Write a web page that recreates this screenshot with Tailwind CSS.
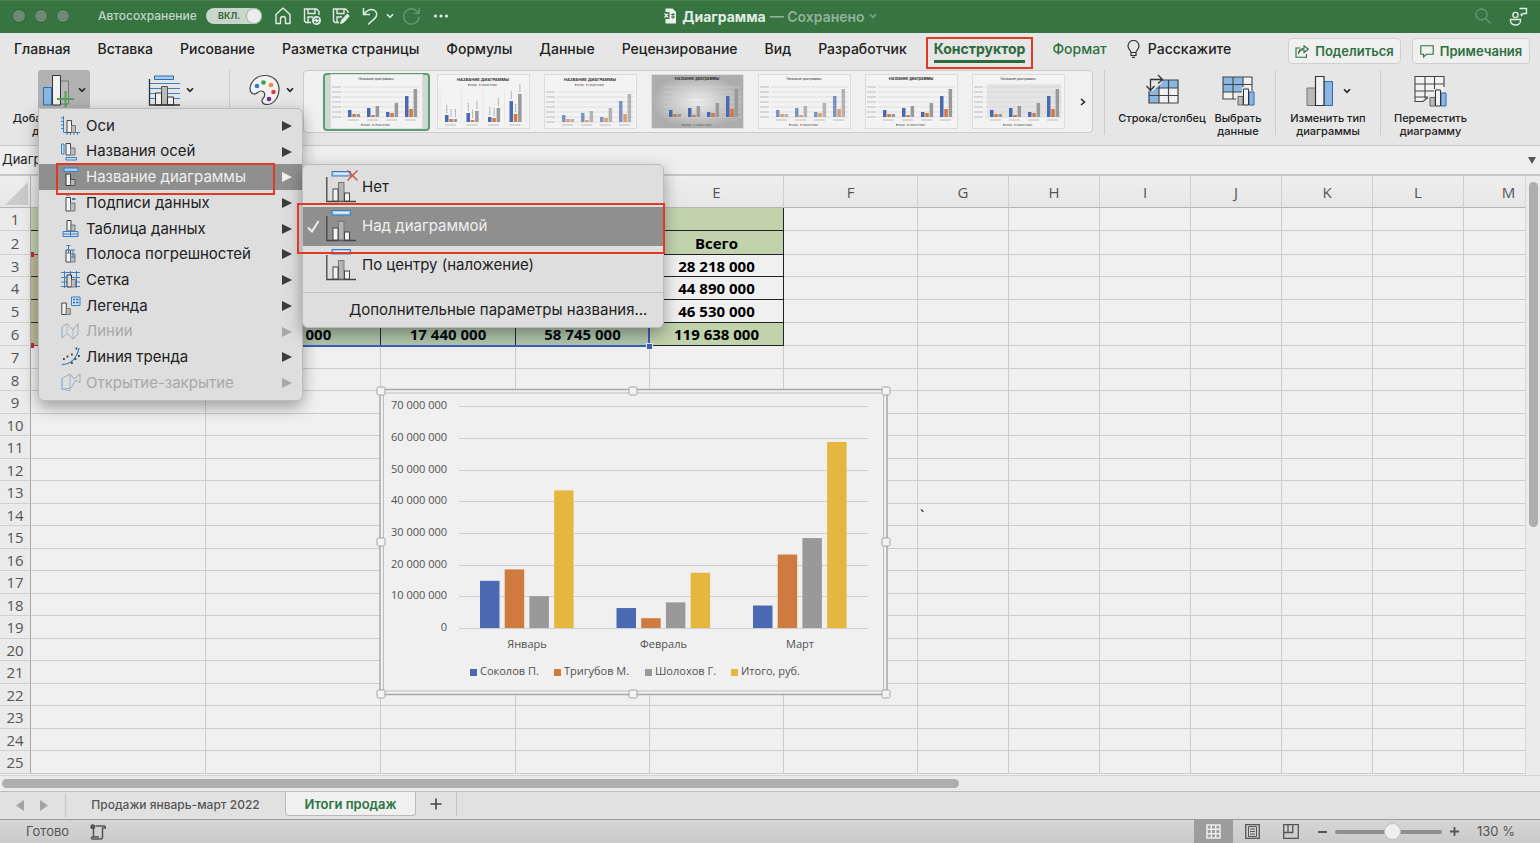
<!DOCTYPE html>
<html lang="ru">

<head>
    <meta charset="UTF-8">
    <meta name="viewport" content="width=device-width, initial-scale=1.0">
    <title>Диаграмма — Сохранено</title>
    <script src="https://cdn.jsdelivr.net/npm/@tailwindcss/browser@4"></script>
</head>

<body class="relative flex flex-col h-screen overflow-hidden bg-[#e6e6e6] font-['Inter','Liberation_Sans',sans-serif] text-[#222]">

    <!-- shared icon shapes -->
    <svg class="hidden">
        <symbol id="chev" viewBox="0 0 8 6"><path d="M1 1.2 4 4.4 7 1.2" fill="none" stroke="currentColor" stroke-width="1.6" /></symbol>
        <symbol id="minichart" viewBox="0 1 30 34">
            <path d="M.8 7v24.500H30" fill="none" stroke="#444" stroke-width="1.300" />
            <rect x="12.500" y="12.500" width="5.500" height="18.500" fill="#b5b3b1" stroke="#777" />
            <rect x="7" y="19" width="5" height="12" fill="#f3f3f3" stroke="#444" />
            <rect x="18.500" y="23" width="5" height="8" fill="#f3f3f3" stroke="#444" />
            <rect x="6" y="1.500" width="18.500" height="4.500" fill="#a9cdee" stroke="#3a7fbf" />
            <path d="M8 3.800h14.500" stroke="#fff" />
        </symbol>
    </svg>

    <!-- title bar -->
    <header class="grid grid-cols-[1fr_auto_1fr] items-center h-[33px] shrink-0 pb-[2px] bg-[#367442] border-t border-[#46804f] text-[#e3ece4]">
        <div class="flex items-center pl-3">
            <div class="flex gap-2">
                <span class="size-[14px] rounded-full bg-[#6d8a72] border border-[#2f6238]"></span>
                <span class="size-[14px] rounded-full bg-[#6d8a72] border border-[#2f6238]"></span>
                <span class="size-[14px] rounded-full bg-[#6d8a72] border border-[#2f6238]"></span>
            </div>
            <label for="autosave" class="ml-7 w-[100px] text-[12px] font-medium whitespace-nowrap text-[#c3d6c6]">Автосохранение</label>
            <span class="relative ml-2 flex items-center w-14 h-4 rounded-full bg-[#c9d6cb]">
                <input id="autosave" type="checkbox" checked class="absolute inset-0 appearance-none">
                <span class="ml-3 text-[9px] font-bold text-[#3f6747]">ВКЛ.</span>
                <span class="absolute right-0 size-4 rounded-full bg-[#ededed] border border-[#a5b5a8]"></span>
            </span>
            <button aria-label="Домой" class="ml-3"><svg width="18" height="18" viewBox="0 0 18 18" fill="none" stroke="currentColor" stroke-width="1.400"><path d="M2 7.500 9 1l7 6.500V16.500h-4.500V12a2.500 2.500 0 0 0-5 0v4.500H2Z" stroke-linejoin="round" /></svg></button>
            <button aria-label="Сохранить" class="ml-[11px]"><svg width="19" height="19" viewBox="0 0 19 19" fill="none" stroke="currentColor" stroke-width="1.400"><path d="M8 15.500H3L1.500 14V2h12l2.500 2.500V8M5 2v4.500h7V2M5 15.500V10h5" /><circle cx="13.500" cy="13.500" r="4.500" fill="#e3ece4" stroke="none" /><path d="M11.300 13a2.300 2.300 0 0 1 4-1M15.800 14a2.300 2.300 0 0 1-4 1M15.500 10.800V12.300H14M11.500 16.200V14.700H13" stroke="#367442" stroke-width=".9" /></svg></button>
            <button aria-label="Сохранить как" class="ml-[10px]"><svg width="19" height="19" viewBox="0 0 19 19" fill="none" stroke="currentColor" stroke-width="1.400"><path d="M7 15.500H3L1.500 14V2h12l2.500 2.500V6M5 2v4.500h7V2M5 15.500V10h5" /><path d="m8.500 16.500 1-3.200L15.300 7l2 2-5.800 6.500Z" fill="currentColor" stroke-width="1" /></svg></button>
            <button aria-label="Отменить" class="ml-[11px]"><svg width="17" height="19" viewBox="0 0 17 19" fill="none" stroke="currentColor" stroke-width="1.500"><path d="M1.500 1v6.500H8M1.800 7.200C5 3.500 9 1.800 12 3.200c3.600 1.800 3.300 5.800.8 8.200L6 17.500" /></svg></button>
            <button aria-label="Список отмены" class="ml-[7px]"><svg width="8" height="6"><use href="#chev" /></svg></button>
            <button aria-label="Повторить" class="ml-2 text-[#6b9a75]"><svg width="19" height="19" viewBox="0 0 19 19" fill="none" stroke="currentColor" stroke-width="1.300"><path d="M17 9.500a7.700 7.700 0 1 1-2.500-5.700L17 6.200M17.200 1v5.400h-5.400" /></svg></button>
            <button aria-label="Ещё" class="ml-3"><svg width="16" height="4" fill="currentColor"><circle cx="2.500" cy="2" r="1.600" /><circle cx="8" cy="2" r="1.600" /><circle cx="13.500" cy="2" r="1.600" /></svg></button>
        </div>
        <div class="flex items-center text-[14px] font-bold">
            <svg width="14" height="16" viewBox="0 0 14 16"><path d="M2.500.5h7L13 4v11.500H2.500Z" fill="#edf1ed" /><path d="M0 4h6.500v7H0Z" fill="#367442" /><path d="m1.500 5.500 3.500 4m0-4-3.500 4" stroke="#edf1ed" stroke-width="1.200" /><path d="M8 6.500h4M8 9h4M10 5v6" stroke="#367442" /></svg>
            <h1 class="ml-[5px]">Диаграмма</h1>
            <span class="ml-1 font-semibold text-[#92b399]">— Сохранено</span>
            <svg class="ml-1 text-[#7ea487]" width="8" height="6"><use href="#chev" /></svg>
        </div>
        <div class="flex items-center justify-end gap-[18px] pr-3">
            <button aria-label="Поиск" class="text-[#6b9a75]"><svg width="16" height="16" viewBox="0 0 16 16" fill="none" stroke="currentColor" stroke-width="1.300"><circle cx="6.500" cy="6.500" r="5.500" /><path d="m10.500 10.500 5 5" /></svg></button>
            <button aria-label="Совместная работа"><svg width="19" height="19" viewBox="0 0 19 19" fill="none" stroke="currentColor" stroke-width="1.400"><circle cx="6.500" cy="8" r="2.600" /><path d="M1.500 12.500h10v1.500a5 4 0 0 1-10 0ZM10.500 1.500h7v5h-3L12.500 8.500 12 6.500" /></svg></button>
        </div>
    </header>

    <!-- ribbon tabs -->
    <nav class="relative flex items-start h-[37px] shrink-0 pl-[14px] pr-[10px] text-[14px] leading-5 font-medium whitespace-nowrap">
        <div class="flex gap-[27px] pt-[6px]">
            <a href="#">Главная</a>
            <a href="#">Вставка</a>
            <a href="#">Рисование</a>
            <a href="#">Разметка страницы</a>
            <a href="#">Формулы</a>
            <a href="#">Данные</a>
            <a href="#">Рецензирование</a>
            <a href="#">Вид</a>
            <a href="#">Разработчик</a>
            <a href="#" class="relative h-6 border-b-[3px] border-[#2c6a3b] font-bold text-[#2c6a3b]">Конструктор
                <span class="absolute -left-2 -top-[2px] -right-2 h-8 border-2 border-[#e03a24]"></span></a>
            <a href="#" class="text-[#2f6f3f]">Формат</a>
        </div>
        <a href="#" class="flex items-center gap-2 ml-5 pt-[6px]">
            <svg width="13" height="18" viewBox="0 0 13 18" fill="none" stroke="#333" stroke-width="1.200"><path d="M4 12.500C4 10.500 1 9.500 1 6a5.500 5.500 0 0 1 11 0c0 3.500-3 4.500-3 6.500ZM4 12.500V15.500h5V12.500M5 17.300h3" /></svg>
            Расскажите</a>
        <button class="flex items-center justify-center gap-[6px] ml-auto mt-[5px] w-[113px] h-[26px] rounded border border-[#cfcfcf] bg-[#f0f0f0] text-[13px] font-semibold text-[#2f6f3f]">
            <svg width="14" height="13" viewBox="0 0 14 13" fill="none" stroke="currentColor" stroke-width="1.100"><path d="M5 3H1v9.300h10.500V9M3.500 9C4 6 6 4.800 9 4.800V7.500L13.300 4 9 .8v2.400C5.500 3.200 3.500 5.500 3.500 9Z" /></svg>
            Поделиться</button>
        <button class="flex items-center justify-center gap-[6px] ml-[11px] mt-[5px] w-[118px] h-[26px] rounded border border-[#cfcfcf] bg-[#f0f0f0] text-[13px] font-semibold text-[#2f6f3f]">
            <svg width="14" height="13" viewBox="0 0 14 13" fill="none" stroke="currentColor" stroke-width="1.100"><path d="M.8.8h12.400v8.500H6.500L3.500 12V9.300H.8Z" /></svg>
            Примечания</button>
    </nav>

    <!-- ribbon -->
    <section class="flex h-[75px] shrink-0 text-[11px] leading-[13px] text-center font-medium whitespace-nowrap">
        <button class="flex flex-col items-center w-32">
            <span class="flex items-center gap-2 h-[39px] w-[52px] pl-1 rounded-[3px] bg-[#b1b1b1]">
                <svg width="32" height="34" viewBox="0 0 32 34"><path d="M1.500 14.500h8V32h-8Z" fill="#8ab7e2" stroke="#2b6cb0" /><path d="M18 8h8.500v23H18Z" fill="#b8b8b8" stroke="#777" /><path d="M10.500 2.500h8V32h-8Z" fill="#f2f2f2" stroke="#333" /><path d="M15 26h17M23.500 18v16" stroke="#4fa35c" stroke-width="2" /></svg>
                <svg class="-ml-1" width="8" height="6"><use href="#chev" /></svg>
            </span>
            <span class="mt-[3px]">Добавить элемент<br>диаграммы</span>
        </button>
        <button class="flex flex-col items-center w-[85px]">
            <span class="flex items-center gap-[6px] h-[39px]">
                <svg width="32" height="34" viewBox="0 0 32 34" fill="none"><path d="M2 10.500h30M2 15.500h30M2 20.500h30M2 25.500h30" stroke="#3c82c4" stroke-width="1.200" /><path d="M6.500 3h19v3.500h-19Z" fill="#a9cdee" stroke="#2b6cb0" /><path d="M13.500 13.500h6V32h-6Z" fill="#bbb" stroke="#555" /><path d="M7.500 20h6v12h-6ZM19.500 24h6v8h-6Z" fill="#f2f2f2" stroke="#333" /><path d="M1.500 6v26H32" stroke="#333" stroke-width="1.300" /></svg>
                <svg width="8" height="6"><use href="#chev" /></svg>
            </span>
            <span class="mt-[3px]">Экспресс-<br>макет</span>
        </button>
        <span class="ml-4 w-px h-[65px] bg-[#cdcdcd]"></span>
        <button class="flex flex-col items-center w-[73px] pl-[10px]">
            <span class="flex items-center gap-[6px] h-[39px]">
                <svg width="31" height="32" viewBox="0 0 31 32"><path d="M1 14C2 7 8 1.500 16 1.500c8 0 14 5.500 14 13.500S25 30.500 18 30.500c-5 0-6-4-4-6 3-3 2-7.500-2-7.500-3 0-4 3.500-7 3-3-.5-4-3-4-6Z" fill="#f2f2f2" stroke="#444" stroke-width="1.200" /><circle cx="8" cy="12" r="2.300" fill="#2f7fc6" /><circle cx="14.500" cy="8.500" r="2.300" fill="#3f9e4d" /><circle cx="22" cy="11" r="2.300" fill="#e8913a" /><circle cx="24.500" cy="18" r="2.300" fill="#d8433b" /><circle cx="20" cy="25" r="2.300" fill="#7b2a8c" /></svg>
                <svg width="8" height="6"><use href="#chev" /></svg>
            </span>
            <span class="mt-[3px]">Изменить<br>цвета</span>
        </button>
        <div class="flex items-center flex-1 min-w-0 h-[63px] pl-[19px] rounded border border-[#cbcbcb] bg-[#f0f0f0]">
            <div id="styles" class="flex flex-1 min-w-0 overflow-hidden"></div>
            <button aria-label="Другие стили" class="w-[19px] flex justify-center"><svg width="6" height="8" viewBox="0 0 6 8"><path d="M1 1l3.500 3L1 7" fill="none" stroke="#222" stroke-width="1.500" /></svg></button>
        </div>
        <span class="ml-[11px] w-px h-[65px] bg-[#cdcdcd]"></span>
        <button class="flex flex-col items-center w-[114px]">
            <span class="flex items-center h-[41px]">
                <svg width="34" height="36" viewBox="0 0 34 36" fill="none"><path d="M4 7h29v23H4Z" fill="#f2f2f2" /><path d="M4 7h29v8H14v15H4Z" fill="#8ab7e2" /><path d="M4 7h29v23H4ZM4 15h29M4 22.500h29M14 7v23M23.500 7v23" stroke="#444" stroke-width="1.200" /><path d="M0 3h17v7L8 18H0Z" fill="#e6e6e6" /><path d="M5.500 17V6.500H17M1.500 13l4 4.500 4-4.500M13 2l4.500 4.500-4.500 4" stroke="#333" stroke-width="1.300" /></svg>
            </span>
            <span class="mt-px">Строка/столбец</span>
        </button>
        <button class="flex flex-col items-center w-[38px]">
            <span class="flex items-center h-[41px]">
                <svg width="33" height="32" viewBox="0 0 33 32" fill="none"><path d="M1 2h29v22H1Z" fill="#f2f2f2" /><path d="M1 2h20v15H1Z" fill="#8ab7e2" /><path d="M1 2h29v22H1ZM1 9.500h29M1 17h29M11 2v22M21 2v22" stroke="#444" stroke-width="1.100" /><path d="M14 18h6v-6h7v4h6v15H14Z" fill="#e6e6e6" /><path d="M16 21.500h5V30h-5Z" fill="#bbb" stroke="#666" /><path d="M27 17h5v13h-5Z" fill="#8ab7e2" stroke="#2b6cb0" /><path d="M21.500 14h5v16h-5Z" fill="#f2f2f2" stroke="#333" /></svg>
            </span>
            <span class="mt-px">Выбрать<br>данные</span>
        </button>
        <span class="ml-[18px] w-px h-[65px] bg-[#cdcdcd]"></span>
        <button class="flex flex-col items-center w-[104px]">
            <span class="flex items-center gap-[9px] h-[41px]">
                <svg width="28" height="32" viewBox="0 0 28 32"><path d="M1 13h9v17.500H1Z" fill="#bbb9b7" stroke="#777" /><path d="M18 6.500h8.500v24H18Z" fill="#8ab7e2" stroke="#2b6cb0" /><path d="M9.500 1.500h8.500v29H9.500Z" fill="#f2f2f2" stroke="#333" stroke-width="1.200" /></svg>
                <svg width="8" height="6"><use href="#chev" /></svg>
            </span>
            <span class="mt-px">Изменить тип<br>диаграммы</span>
        </button>
        <span class="w-px h-[65px] bg-[#cdcdcd]"></span>
        <button class="flex flex-col items-center w-[99px] mr-[60px]">
            <span class="flex items-center h-[41px]">
                <svg width="33" height="32" viewBox="0 0 33 32" fill="none"><path d="M1 1.500h29v20L14 26.500H9L1 26Z" fill="#f2f2f2" /><path d="M14 22.500 9 26.500H1V1.500h29V12M1 9h29M1 16h21M1 22h13M11 1.500v22M20.500 1.500v17" stroke="#444" stroke-width="1.100" /><path d="M14 20h6v-6h7v2h6v15H14Z" fill="#e6e6e6" /><path d="M16 22.500h5V31h-5Z" fill="#bbb" stroke="#666" /><path d="M27 18h5v13h-5Z" fill="#8ab7e2" stroke="#2b6cb0" /><path d="M21.500 15h5v16h-5Z" fill="#f2f2f2" stroke="#333" /></svg>
            </span>
            <span class="mt-px">Переместить<br>диаграмму</span>
        </button>
    </section>

    <!-- name box / formula bar -->
    <div class="flex items-center h-[31px] shrink-0 border-t border-b-2 border-[#c6c6c6] bg-[#eeeeee]">
        <input aria-label="Имя" value="Диаграмма 2" class="w-[120px] pl-[2px] text-[13px] outline-none">
        <input aria-label="Строка формул" class="flex-1 outline-none">
        <svg class="mr-1" width="8" height="7"><path d="M0 0h8L4 7Z" fill="#555" /></svg>
    </div>

    <!-- sheet -->
    <main class="flex flex-1 min-h-0 font-['Open_Sans','Noto_Sans',sans-serif]">
        <div class="relative flex-1 min-w-0 overflow-hidden bg-[#f0f0f0]">
            <table class="table-fixed w-[1554px] border-separate border-spacing-0 text-[15px] leading-[18px] text-center">
                <colgroup>
                    <col class="w-[31px]"><col class="w-[175px]"><col class="w-[175px]"><col class="w-[135px]"><col class="w-[134px]"><col class="w-[134px]"><col class="w-[134px]">
                    <col class="w-[91px]"><col class="w-[91px]"><col class="w-[91px]"><col class="w-[91px]"><col class="w-[91px]"><col class="w-[91px]"><col class="w-[90px]">
                </colgroup>
                <thead>
                    <tr id="letters" class="h-8 bg-linear-to-b from-[#eeeeee] to-[#e6e6e6] text-[#555]"></tr>
                </thead>
                <tbody id="rows" class="text-black"></tbody>
            </table>

            <!-- source ranges of the chart -->
            <div class="absolute left-[31px] top-[78px] w-[175px] h-[92px] border-y border-[#b3323a] bg-[#c0392b]/15"></div>
            <span class="absolute left-[31px] top-[76px] w-[3px] h-[5px] bg-[#b3323a]"></span>
            <span class="absolute left-[31px] top-[167px] w-[3px] h-[5px] bg-[#b3323a]"></span>
            <div class="absolute left-[206px] top-[78px] w-[444px] h-[93px] border-2 border-[#3a5fbd] bg-[#3a5fbd]/10"></div>
            <span class="absolute left-[646px] top-[167px] size-[7px] border border-[#f0f0f0] bg-[#3a5fbd]"></span>

            <!-- chart object -->
            <figure class="absolute left-[376px] top-[209px]">
                <svg id="chart" width="516" height="314" class="text-[11px] fill-[#505050]"></svg>
            </figure>
            <span class="absolute left-[920px] top-[328px] text-[15px] text-black">`</span>
        </div>
        <div class="relative w-[15px] border-l border-[#d8d8d8] bg-[#ebebeb] pt-[6px]">
            <div class="ml-[3px] w-[9px] h-[345px] rounded-full bg-[#aeaeae]"></div>
        </div>
    </main>

    <!-- horizontal scrollbar -->
    <div class="flex items-center h-4 shrink-0 pl-[2px] border-t border-[#d4d4d4] bg-[#ebebeb]">
        <div class="w-[957px] h-[9px] rounded-full bg-[#aeaeae]"></div>
    </div>

    <!-- sheet tabs -->
    <div class="flex h-7 shrink-0 border-t border-[#bdbdbd] bg-[#e1e1e1] text-[13px] font-medium text-[#555]">
        <div class="flex items-center gap-4 w-[66px] h-6 pl-4 mt-[1px] border-r border-[#c4c4c4]">
            <svg width="8" height="11"><path d="M8 0v11L0 5.500Z" fill="#a3a3a3" /></svg>
            <svg width="8" height="11"><path d="M0 0v11l8-5.500Z" fill="#a3a3a3" /></svg>
        </div>
        <button class="w-[219px] h-6 pt-[2px] text-[12px]">Продажи январь-март 2022</button>
        <button class="w-[131px] h-6 pt-[2px] rounded-b border border-t-0 border-[#b9b9b9] bg-[#f0f0f0] font-semibold text-[#2c7440]">Итоги продаж</button>
        <button aria-label="Новый лист" class="flex items-center justify-center w-[41px] h-6 border-r border-[#c4c4c4]"><svg width="12" height="12"><path d="M6 .5v11M.5 6h11" stroke="#444" stroke-width="1.600" /></svg></button>
    </div>

    <!-- status bar -->
    <footer class="flex items-center h-6 shrink-0 border-t border-[#9c9c9c] bg-linear-to-b from-[#d6d6d6] to-[#cacaca] text-[13px] text-[#555]">
        <span class="ml-[26px]">Готово</span>
        <svg class="ml-[21px]" width="16" height="16" viewBox="0 0 16 16" fill="none" stroke="#555" stroke-width="1.500"><circle cx="2.800" cy="2.800" r="2.500" fill="#555" stroke="none" /><path d="M3.500 5v8M5.500 2h8.500c1 0 1.500.8 1.500 2h-3v9c0 1.500-.5 2-2 2H2.500C1 15 1 13 2.500 13H9" /></svg>
        <div class="flex ml-auto h-full">
            <button aria-label="Обычный" class="flex items-center justify-center w-[39px] bg-[#9c9c9c]"><svg width="15" height="15" viewBox="0 0 15 15"><path d="M1 1h13v13H1ZM1 5.300h13M1 9.700h13M5.300 1v13M9.700 1v13" fill="none" stroke="#ededed" stroke-width="1.500" /></svg></button>
            <button aria-label="Разметка страницы" class="flex items-center justify-center w-[39px]"><svg width="15" height="15" viewBox="0 0 15 15" fill="none" stroke="#555"><path d="M.7.7h13.600v13.600H.7Z" stroke-width="1.300" /><path d="M3.500 2.500h8v10h-8ZM5 5h5M5 7.500h5M5 10h5" /></svg></button>
            <button aria-label="Страничный режим" class="flex items-center justify-center w-[38px]"><svg width="16" height="15" viewBox="0 0 16 15" fill="none" stroke="#555" stroke-width="1.300"><path d="M.7.7h14.600v13.600H.7ZM.7 8.500h9V.7M5 .7v7.800" /></svg></button>
        </div>
        <button aria-label="Уменьшить" class="ml-[8px] w-[9px] h-[2px] bg-[#555]"></button>
        <input type="range" aria-label="Масштаб" min="0" max="100" value="54" class="ml-2 w-[107px] h-1 rounded-full appearance-none bg-[#8f8f8f] [&::-webkit-slider-thumb]:appearance-none [&::-webkit-slider-thumb]:size-[17px] [&::-webkit-slider-thumb]:rounded-full [&::-webkit-slider-thumb]:bg-[#f0f0f0] [&::-webkit-slider-thumb]:border [&::-webkit-slider-thumb]:border-[#c0c0c0]">
        <button aria-label="Увеличить" class="ml-2"><svg width="9" height="9"><path d="M4.500 0v9M0 4.500h9" stroke="#555" stroke-width="1.800" /></svg></button>
        <span class="ml-[18px] mr-[25px]">130 %</span>
    </footer>

    <!-- chart element menu -->
    <ul id="menu" class="absolute left-[38px] top-[108px] grid auto-rows-fr w-[265px] h-[293px] py-1 rounded-b-md rounded-tr-md border border-[#bcbcbc] bg-[#dedede] shadow-[0_6px_16px_rgba(0,0,0,0.35)] text-[15px] whitespace-nowrap"></ul>
    <span class="absolute left-[56px] top-[163px] w-[219px] h-8 border-2 border-[#e03a24]"></span>

    <!-- chart title submenu -->
    <ul class="absolute left-[302px] top-[164px] w-[362px] h-[164px] pt-[3px] rounded-md border border-[#bcbcbc] bg-[#dedede] shadow-[0_6px_16px_rgba(0,0,0,0.35)] text-[15px] whitespace-nowrap">
        <li><button class="relative flex items-center w-full h-[39px] pl-[23px] gap-[6px]">
            <svg width="30" height="34"><use href="#minichart" /></svg>Нет
            <svg class="absolute left-[44px] top-[2px]" width="11" height="11"><path d="m.5.5 10 10m0-10-10 10" stroke="#d8433b" stroke-width="1.300" /></svg>
        </button></li>
        <li><button class="relative flex items-center w-full h-[39px] pl-[23px] gap-[6px] bg-[#8f8f8f] text-[#f0f0f0]">
            <svg class="absolute left-1 top-[13px]" width="13" height="13"><path d="m1 7.500 4 4L11.500 1" fill="none" stroke="#f0f0f0" stroke-width="2" /></svg>
            <svg width="30" height="34"><use href="#minichart" /></svg>Над диаграммой
        </button></li>
        <li><button class="flex items-center w-full h-[39px] pl-[23px] gap-[6px]">
            <svg width="30" height="34"><use href="#minichart" /></svg>По центру (наложение)
        </button></li>
        <li class="mt-[7px] border-t border-[#c2c2c2]"><button class="flex items-center h-[35px] pl-[46px]">Дополнительные параметры названия...</button></li>
    </ul>
    <span class="absolute left-[297px] top-[203px] w-[368px] h-[51px] border-2 border-[#e03a24]"></span>

    <script>
        // menu entries: name, icon, state
        const items = [
            ['Оси', '<path d="M2.500 0v16.500H19M0 2h2.500M0 5.500h2.500M0 9h2.500M0 12.500h2.500M6 16.500V19M9.500 16.500V19M13 16.500V19M16.500 16.500V19" fill="none" stroke="#3a7fbf"/><path d="M6 4.500h4.500v12H6Z" fill="#f2f2f2" stroke="#444"/><path d="M10.500 9.500h4v7h-4Z" fill="#bbb" stroke="#777"/>'],
            ['Названия осей', '<path d="M.5 2h2.500v10H.500ZM5 15.500h10.500V18H5Z" fill="#cfe2f3" stroke="#3a7fbf"/><path d="M5 1.500h4.500v11.500H5Z" fill="#f2f2f2" stroke="#444"/><path d="M9.500 6h4.500v7H9.500Z" fill="#bbb" stroke="#777"/>'],
            ['Название диаграммы', '<path d="M3 1h14v3.500H3Z" fill="#a9cdee" stroke="#3a7fbf"/><path d="M5 7h4.500v11.500H5Z" fill="#f2f2f2" stroke="#333"/><path d="M9.500 12.500H14v6H9.500Z" fill="#bbb" stroke="#555"/>', 'on'],
            ['Подписи данных', '<path d="M5 4.500h4.500V18H5Z" fill="#f2f2f2" stroke="#444"/><path d="M9.500 10H14v8H9.500Z" fill="#bbb" stroke="#777"/><path d="M5 1.500h4M11 6h3.500" stroke="#3a7fbf" stroke-width="2"/>'],
            ['Таблица данных', '<path d="M6 1.500h4V12H6Z" fill="#f2f2f2" stroke="#444"/><path d="M10 6h4v6h-4Z" fill="#bbb" stroke="#777"/><path d="M2 12.500h15v5H2ZM2 15h15M9.500 12.500v5" fill="#cfe2f3" stroke="#3a7fbf"/>'],
            ['Полоса погрешностей', '<path d="M5 6h4.500v12H5Z" fill="#f2f2f2" stroke="#444"/><path d="M9.500 10H14v8H9.500Z" fill="#bbb" stroke="#777"/><path d="M7.500 1v8M5.500 1.500h4M5.500 9h4M12 6v7M10 6h4M10 13h4" stroke="#3a7fbf"/>'],
            ['Сетка', '<path d="M0 2.500h19M0 7.500h19M0 12h19M0 16.500h19M3.500 1v17M15.500 1v17M9.500 1v4" stroke="#3a7fbf"/><path d="M6 5h4.500v12H6Z" fill="#ddd" stroke="#333"/><path d="M10.500 9.500h4V17h-4Z" fill="#bbb" stroke="#777"/>'],
            ['Легенда', '<path d="M.8 7h4.500v11.500H.8Z" fill="#f2f2f2" stroke="#444"/><path d="M5.300 12.500h4v6h-4Z" fill="#bbb" stroke="#777"/><path d="M10.500 1h8.500v8.500h-8.500Z" fill="#cfe2f3" stroke="#3a7fbf"/><path d="M12 3.500h2M15 3.500h2.500M12 6.500h2M15 6.500h2.500" stroke="#2b6cb0" stroke-width="1.500"/>'],
            ['Линии', '<path d="M1 5l5-3.500L12 8l5-6.500V12l-5 5-6-5.500L1 16Z" fill="none" stroke="#a9a9a9"/><path d="M1 5v11M6 1.500v10M12 8v9" stroke="#9fbedb"/>', 'off'],
            ['Линия тренда', '<path d="M1 17.500C9 17.500 16 12 18 1" fill="none" stroke="#3a7fbf" stroke-width="1.300"/><path d="M2 12h1.800M5.500 9.500h1.800M10 7.500h1.800M14.500 1.500h1.800M10 16h1.800M13.500 12h1.800M17 9h1.800" stroke="#444" stroke-width="1.800"/>'],
            ['Открытие-закрытие', '<path d="M1 5.500 9 1l4 5 6-5v9l-4-3-5 8-9 1.500Z" fill="none" stroke="#a9a9a9"/><path d="M1 5.500v11M9 1v17l-8-2" fill="none" stroke="#8fb6db"/>', 'off'],
        ];
        document.getElementById('menu').innerHTML = items.map(([name, icon, state]) => `
            <li class="${state === 'on' ? 'bg-[#8f8f8f] text-[#f0f0f0]' : state === 'off' ? 'text-[#a8a8a8]' : 'text-[#222]'}">
                <button class="flex items-center w-full h-full pl-[22px] pr-[10px]">
                    <svg width="20" height="20">${icon}</svg>
                    <span class="ml-[5px]">${name}</span>
                    <svg class="ml-auto" width="10" height="10"><path d="M0 0v10l10-5Z" fill="${state === 'on' ? '#f0f0f0' : state === 'off' ? '#a8a8a8' : '#3c3c3c'}"/></svg>
                </button>
            </li>`).join('');

        // sheet
        const letters = 'ABCDEFGHIJKLM'.split('');
        document.getElementById('letters').innerHTML =
            '<th class="relative border-r border-b border-[#b5b5b5]"><svg class="absolute right-[2px] bottom-[2px]" width="23" height="23"><path d="M23 0v23H0Z" fill="#cbcbcb"/></svg></th>' +
            letters.map(l => `<th class="border-r border-b border-r-[#cfcfcf] border-b-[#b5b5b5] font-normal">${l}</th>`).join('');

        const data = {
            E2: 'Всего', E3: '28 218 000', E4: '44 890 000', E5: '46 530 000',
            B6: '43 453 000', C6: '17 440 000', D6: '58 745 000', E6: '119 638 000',
        };
        const heights = { 1: 23, 2: 24, 3: 22, 4: 23, 5: 23, 6: 23, 7: 23 };
        let html = '';
        for (let r = 1; r <= 25; r++) {
            const h = heights[r] || (r % 2 ? 23 : 22);
            html += `<tr style="height:${h}px"><th class="p-0 border-r border-b border-r-[#a8a8a8] border-b-[#d0d0d0] bg-[#ebebeb] font-normal text-[#555]">${r}</th>`;
            for (const l of letters) {
                const inTable = r <= 6 && l <= 'E';
                const green = inTable && (r <= 2 || r === 6 || l === 'A');
                const cls = green ? 'border-[#222] bg-[#c0d3ac]' : inTable ? 'border-[#222]' : 'border-[#cccccc]';
                html += `<td class="p-0 border-r border-b font-bold ${cls}">${data[l + r] || ''}</td>`;
            }
            html += '</tr>';
        }
        document.getElementById('rows').innerHTML = html;

        // sales chart, values in millions
        const colors = ['#4a69b2', '#cf7a3e', '#999999', '#e6b73f'];
        const series = ['Соколов П.', 'Тригубов М.', 'Шолохов Г.', 'Итого, руб.'];
        const months = [
            ['Январь', [14.9, 18.5, 10.05, 43.45]],
            ['Февраль', [6.3, 3.1, 8.1, 17.44]],
            ['Март', [7.1, 23.2, 28.4, 58.75]],
        ];
        let s = '<rect x="4" y="4.500" width="507" height="305" fill="#f0f0f0" stroke="#a9a9a9" stroke-width="1.500"/>' +
            '<rect x="7.500" y="8" width="500" height="298" fill="#f0f0f0" stroke="#bdbdbd"/>';
        for (let i = 0; i <= 7; i++) {
            const y = Math.round(243 - i * 31.67);
            s += `<path d="M83 ${y + .5}h409" stroke="#d0d0d0"/><text x="71" y="${y + 3}" text-anchor="end">${i ? i + '0 000 000' : '0'}</text>`;
        }
        months.forEach(([name, vals], m) => {
            const x0 = 104 + m * 136.5;
            vals.forEach((v, i) => {
                const h = v * 3.167;
                s += `<rect x="${x0 + i * 24.7}" y="${243 - h}" width="19.500" height="${h}" fill="${colors[i]}"/>`;
            });
            s += `<text x="${x0 + 47}" y="263" text-anchor="middle">${name}</text>`;
        });
        [94, 178, 269, 355].forEach((x, i) => {
            s += `<rect x="${x}" y="284" width="7" height="7" fill="${colors[i]}"/><text x="${x + 10}" y="290">${series[i]}</text>`;
        });
        for (const [x, y] of [[5, 6], [257, 6], [510, 6], [5, 157], [510, 157], [5, 309], [257, 309], [510, 309]]) {
            s += `<rect x="${x - 4}" y="${y - 4}" width="8" height="8" rx="1.500" fill="#f3f3f3" stroke="#a3a3a3"/>`;
        }
        document.getElementById('chart').innerHTML = s;

        // chart style gallery
        const looks = [
            { title: 'Название диаграммы', sel: true },
            { title: 'НАЗВАНИЕ ДИАГРАММЫ', bold: true, top: true, labels: true },
            { title: 'НАЗВАНИЕ ДИАГРАММЫ', bold: true, top: true, fade: true },
            { title: 'Название диаграммы', bold: true, dark: true },
            { title: 'Название диаграммы', fade: true },
            { title: 'Название диаграммы', bold: true },
            { title: 'Название диаграммы', hatch: true },
        ];
        const mini = [[7, 3, 3], [9, 2, 11], [5, 4, 14], [21, 8, 28]];
        document.getElementById('styles').innerHTML = looks.map((k, n) => {
            let g = `<defs><radialGradient id="g${n}"><stop offset="0" stop-color="#eee"/><stop offset="1" stop-color="#adadad"/></radialGradient></defs>
                <rect x=".5" y=".5" width="92" height="54" fill="${k.dark ? `url(#g${n})` : '#f3f3f3'}" stroke="#dcdcdc"/>`;
            g += `<text x="46" y="${k.top ? 7 : 6}" text-anchor="middle" font-size="${k.top ? 4 : k.bold ? 4 : 3.3}" font-weight="${k.bold ? 700 : 400}" fill="#333">${k.title}</text>`;
            const ly = k.top ? 11 : 51, base = k.top ? 48 : 43;
            ['Январь', 'Февраль', 'Март'].forEach((t, i) => {
                g += `<rect x="${31 + i * 11}" y="${ly - 1}" width="1.500" height="1.500" fill="${colors[i]}"/><text x="${33 + i * 11}" y="${ly + 1}" font-size="2" fill="#666">${t}</text>`;
            });
            if (k.hatch) g += '<rect x="15" y="10" width="74" height="33" fill="#e4e4e4"/>';
            for (let i = 0; i < 7; i++) {
                const y = base - i * 5;
                if (k.labels) { if (i < 5) g += `<path d="M${3 + i * 21.500} 16V${base}" stroke="#ddd" stroke-width=".6"/>`; continue; }
                g += `<path d="M13 ${y}h77" stroke="#d5d5d5" stroke-width=".6"/>`;
                if (!k.dark) g += `<path d="M2 ${y}h9" stroke="#bbb" stroke-width="1"/>`;
            }
            mini.forEach((v, m) => {
                v.forEach((h, i) => {
                    const x = (k.labels ? 8 : 18) + m * (k.labels ? 21.5 : 19) + i * 4.3;
                    g += `<rect x="${x}" y="${base - h}" width="3.500" height="${h}" fill="${colors[i]}" opacity="${k.fade ? .7 : 1}"/>`;
                    if (k.labels) g += `<path d="M${x + 1.800} ${base - h - 2}v-8" stroke="#999" stroke-dasharray="1.500 .7"/>`;
                });
                g += `<path d="M${(k.labels ? 8 : 18) + m * (k.labels ? 21.5 : 19)} ${base + 3}h11" stroke="#bbb" stroke-width="1"/>`;
            });
            const cls = k.sel ? 'border-2 border-[#5f9b73] bg-[#cbdccf]' : 'border-2 border-transparent';
            return `<button aria-label="Стиль ${n + 1}" class="flex items-center justify-center shrink-0 w-[107px] h-[58px] rounded ${cls}"><svg width="93" height="55">${g}</svg></button>`;
        }).join('');
    </script>
</body>

</html>
